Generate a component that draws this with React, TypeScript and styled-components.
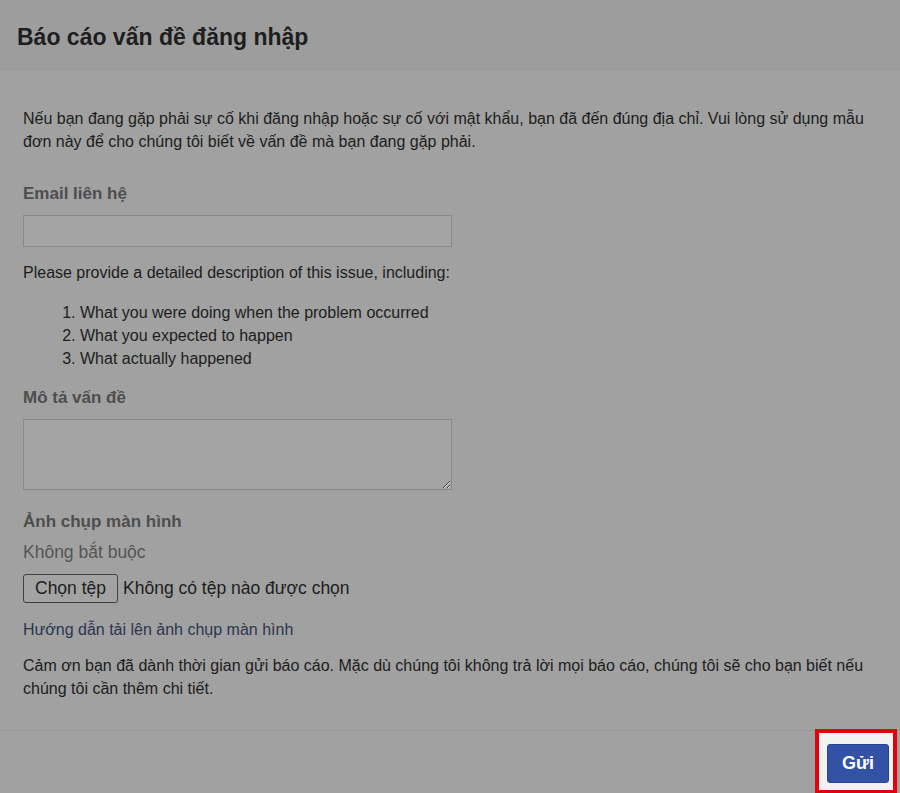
import React from "react";
import styled, { createGlobalStyle } from "styled-components";

const GlobalStyle = createGlobalStyle`
    html, body {
        margin: 0;
        padding: 0;
        background: #a1a1a1;
    }
    * {
        box-sizing: border-box;
    }
`;

const steps = [
    "What you were doing when the problem occurred",
    "What you expected to happen",
    "What actually happened",
];

const App: React.FC = () => {
    return (
        <>
            <GlobalStyle />
            <Page>
                <Header>
                    <Title>Báo cáo vấn đề đăng nhập</Title>
                </Header>
                <Body>
                    <Intro>
                        Nếu bạn đang gặp phải sự cố khi đăng nhập hoặc sự cố với mật khẩu, bạn đã đến đúng địa chỉ. Vui lòng sử dụng mẫu đơn này để cho chúng tôi biết về vấn đề mà bạn đang gặp phải.
                    </Intro>

                    <Label>Email liên hệ</Label>
                    <TextInput type="text" />

                    <Text>Please provide a detailed description of this issue, including:</Text>
                    <Steps>
                        {steps.map((step) => (
                            <li key={step}>{step}</li>
                        ))}
                    </Steps>

                    <Label>Mô tả vấn đề</Label>
                    <TextArea />

                    <Label>Ảnh chụp màn hình</Label>
                    <Hint>Không bắt buộc</Hint>
                    <FileRow>
                        <FileBtn type="button">Chọn tệp</FileBtn>
                        <FileName>Không có tệp nào được chọn</FileName>
                    </FileRow>

                    <HelpLink href="#">Hướng dẫn tải lên ảnh chụp màn hình</HelpLink>

                    <Thanks>
                        Cảm ơn bạn đã dành thời gian gửi báo cáo. Mặc dù chúng tôi không trả lời mọi báo cáo, chúng tôi sẽ cho bạn biết nếu chúng tôi cần thêm chi tiết.
                    </Thanks>
                </Body>
                <Footer>
                    <Highlight>
                        <SendBtn type="button">Gửi</SendBtn>
                    </Highlight>
                </Footer>
            </Page>
        </>
    );
};

export default App;

const Page = styled.div`
    display: flex;
    flex-direction: column;
    height: 793px;
    font-family: "Liberation Sans", Arial, sans-serif;
    color: #1d1d1d;
`;

const Header = styled.div`
    height: 70px;
    display: flex;
    align-items: center;
    padding: 5px 17px 0;
    background: #9d9d9d;
    border-bottom: 1px solid #979797;
`;

const Title = styled.h1`
    margin: 0;
    font-size: 23px;
    font-weight: bold;
    color: #1e1e1e;
`;

const Body = styled.div`
    flex: 1;
    display: flex;
    flex-direction: column;
    align-items: flex-start;
    padding: 37px 23px 0;
    background: #a1a1a1;
    font-size: 16px;
    line-height: 23px;
`;

const Intro = styled.p`
    margin: 0 0 29px;
`;

const Label = styled.div`
    font-size: 17px;
    font-weight: bold;
    color: #4e4e4e;
    margin-bottom: 10px;
`;

const TextInput = styled.input`
    width: 429px;
    height: 32px;
    margin: 0 0 14px;
    border: 1px solid #8a8a8a;
    background: #a4a4a4;
    outline: none;
`;

const Text = styled.p`
    margin: 0 0 17px;
`;

const Steps = styled.ol`
    margin: 0 0 16px;
    padding-left: 57px;
`;

const TextArea = styled.textarea`
    width: 429px;
    height: 71px;
    margin: 0 0 20px;
    border: 1px solid #8a8a8a;
    background: #a4a4a4;
    outline: none;
    resize: vertical;
`;

const Hint = styled.div`
    font-size: 17.5px;
    color: #555;
    margin: -2px 0 9px;
`;

const FileRow = styled.div`
    display: flex;
    align-items: center;
    gap: 5px;
    font-size: 17.5px;
    margin: 1px 0 15px;
`;

const FileBtn = styled.button`
    height: 29px;
    padding: 0 11px;
    font-family: inherit;
    font-size: 17.5px;
    color: #1d1d1d;
    background: #a3a3a3;
    border: 1px solid #3f3f3f;
    border-radius: 3px;
`;

const FileName = styled.span`
    color: #1d1d1d;
`;

const HelpLink = styled.a`
    color: #2c3550;
    text-decoration: none;
    margin-bottom: 13px;
`;

const Thanks = styled.p`
    margin: 0;
`;

const Footer = styled.div`
    height: 63px;
    display: flex;
    justify-content: flex-end;
    align-items: flex-end;
    padding-right: 3px;
    background: #a1a1a1;
    border-top: 1px solid #979797;
`;

const Highlight = styled.div`
    width: 82px;
    height: 64px;
    display: flex;
    align-items: center;
    justify-content: center;
    padding: 3px 0 0 4px;
    background: #f2f2f2;
    border: 4px solid #e3000b;
    border-bottom-width: 3px;
`;

const SendBtn = styled.button`
    width: 62px;
    height: 39px;
    font-family: inherit;
    font-size: 18px;
    font-weight: bold;
    color: #fff;
    background: #3352a6;
    border: 1px solid #2a4590;
    border-radius: 3px;
`;
